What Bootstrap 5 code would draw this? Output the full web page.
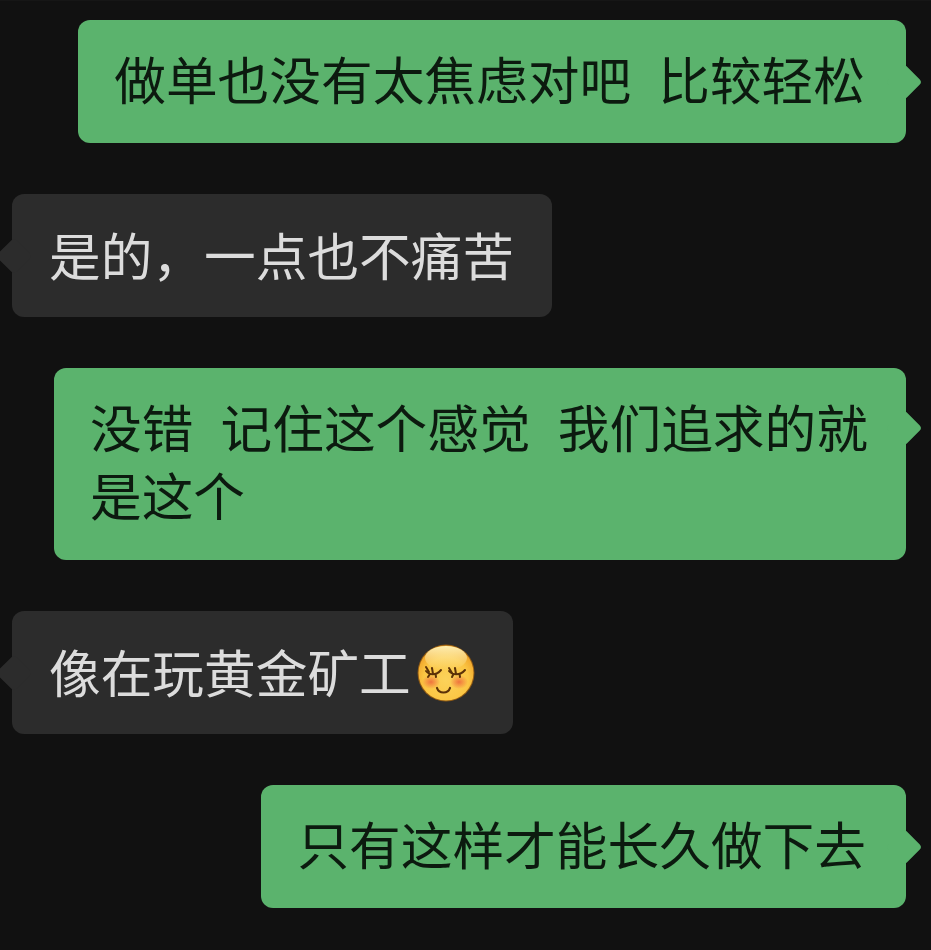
<!DOCTYPE html>
<html lang="zh-CN">
<head>
    <meta charset="UTF-8">
    <meta name="viewport" content="width=device-width, initial-scale=1.0">
    <title>Chat</title>
    <link href="https://cdn.jsdelivr.net/npm/bootstrap@5.3.0/dist/css/bootstrap.min.css" rel="stylesheet">
    <style>
        body {
            background: #111111;
            font-family: "Noto Sans CJK SC", "Noto Sans", sans-serif;
        }

        .chat-list {
            height: 950px;
            padding: 19px 25px 0 12px;
            gap: 51px;
            overflow: hidden;
            border-top: 1px solid #161616;
        }

        .bubble {
            position: relative;
            border-radius: 12px;
            font-size: 51.7px;
            line-height: 68px;
            word-spacing: 2px;
            white-space: pre-wrap;
        }

        .bubble::after {
            content: "";
            position: absolute;
            top: 50%;
            width: 26px;
            height: 26px;
            border-radius: 4px;
            background: inherit;
            transform: translateY(-50%) rotate(45deg);
        }

        .bubble-me {
            background: #5bb36d;
            color: #0c1a0f;
            padding: 24px 41px 31px 36px;
        }

        .bubble-me::after {
            right: -11px;
        }

        .bubble-them {
            background: #2c2c2c;
            color: #dcdcdc;
            padding: 26px 38px 29px 37px;
        }

        .bubble-them::after {
            left: -11px;
        }

        .bubble-wide {
            width: 852px;
            padding-right: 30px;
            padding-bottom: 32px;
        }

        .bubble-wide::after {
            top: 60px;
        }

        .bubble-last {
            padding-right: 40px;
        }

        .emoji-face {
            width: 58px;
            height: 58px;
            margin: 0 0 -9px 6px;
            vertical-align: baseline;
        }
    </style>
</head>
<body>
    <div class="chat-list d-flex flex-column">
        <div class="bubble bubble-me align-self-end">做单也没有太焦虑对吧  比较轻松</div>
        <div class="bubble bubble-them align-self-start">是的，一点也不痛苦</div>
        <div class="bubble bubble-me bubble-wide align-self-end">没错  记住这个感觉  我们追求的就是这个</div>
        <div class="bubble bubble-them align-self-start">像在玩黄金矿工<svg class="emoji-face" viewBox="0 0 58 58" aria-hidden="true">
                <defs>
                    <radialGradient id="faceFill" cx="50%" cy="62%" r="58%">
                        <stop offset="0" stop-color="#fcd25a"/>
                        <stop offset="0.7" stop-color="#fbc644"/>
                        <stop offset="1" stop-color="#f0a52a"/>
                    </radialGradient>
                    <linearGradient id="faceShine" x1="0" y1="0" x2="0" y2="1">
                        <stop offset="0" stop-color="#fff3b8" stop-opacity="0.95"/>
                        <stop offset="1" stop-color="#fff3b8" stop-opacity="0"/>
                    </linearGradient>
                    <radialGradient id="faceBlush">
                        <stop offset="0" stop-color="#ee6a3c" stop-opacity="0.9"/>
                        <stop offset="1" stop-color="#ee6a3c" stop-opacity="0"/>
                    </radialGradient>
                </defs>
                <circle cx="29" cy="29" r="28.500" fill="#8f5a14"/>
                <circle cx="29" cy="29" r="27.500" fill="url(#faceFill)"/>
                <ellipse cx="29" cy="14" rx="21" ry="12" fill="url(#faceShine)"/>
                <ellipse cx="14" cy="38" rx="9" ry="7" fill="url(#faceBlush)"/>
                <ellipse cx="42" cy="38" rx="9" ry="7" fill="url(#faceBlush)"/>
                <g fill="none" stroke="#5c3208" stroke-width="2" stroke-linecap="round">
                    <path d="M9 27 C12 31 19 32 24 26"/>
                    <path d="M9 23 L12 28"/>
                    <path d="M15 24 L16 30"/>
                    <path d="M11 33 L13 30"/>
                    <path d="M19 33 L18.500 30"/>
                    <path d="M32 27 C35 31 43 32 48 26"/>
                    <path d="M32 24 L35 29"/>
                    <path d="M38 24 L39 30"/>
                    <path d="M35 33 L36.500 30"/>
                    <path d="M43 33 L42.500 30"/>
                    <path d="M20 44 C22 50 31 50 33 44" stroke-width="2.200"/>
                </g>
            </svg></div>
        <div class="bubble bubble-me bubble-last align-self-end">只有这样才能长久做下去</div>
    </div>
    <script src="https://cdn.jsdelivr.net/npm/bootstrap@5.3.0/dist/js/bootstrap.bundle.min.js"></script>
</body>
</html>
